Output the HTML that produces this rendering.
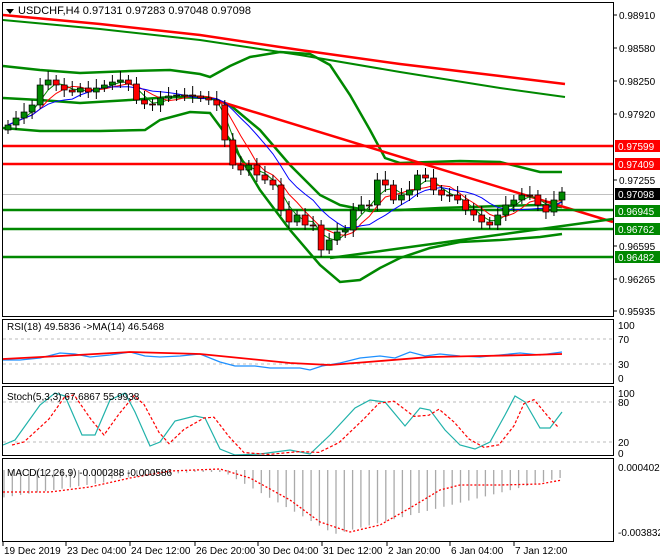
<!DOCTYPE html>
<html><head><meta charset="utf-8"><style>
html,body{margin:0;padding:0;background:#fff;width:660px;height:560px;overflow:hidden}
svg{display:block}
text{font-family:"Liberation Sans",sans-serif;font-size:10px;fill:#000}
</style></head><body>
<svg id="s" width="660" height="560" xmlns="http://www.w3.org/2000/svg">
<rect x="0" y="0" width="660" height="560" fill="#fff"/>
<g id="g"></g>
<!-- panel borders -->
<g fill="none" stroke="#000" stroke-width="1">
<rect x="2.5" y="2.5" width="611" height="314"/>
<rect x="2.5" y="319.5" width="611" height="64"/>
<rect x="2.5" y="386.5" width="611" height="69"/>
<rect x="2.5" y="458.5" width="611" height="83"/>
</g>
<polygon points="6,9 14,9 10,14" fill="#000"/>
<text x="18" y="14" style="font-size:11px">USDCHF,H4  0.97131 0.97283 0.97048 0.97098</text>
<text x="7" y="330">RSI(18) 49.5836  -&gt;MA(14) 46.5468</text>
<text x="7" y="400">Stoch(5,3,3) 67.6867 55.9938</text>
<text x="7" y="476">MACD(12,26,9) -0.000288 -0.000586</text>
<g id="ax"></g>
</svg>
<script>
const NS="http://www.w3.org/2000/svg";
const g=document.getElementById('g'),ax=document.getElementById('ax');
function el(p,t,a,txt){const e=document.createElementNS(NS,t);for(const k in a)e.setAttribute(k,a[k]);if(txt!==undefined)e.textContent=txt;p.appendChild(e);return e;}
function pl(pts,c,w,d){el(g,'polyline',{points:pts.map(p=>p.join(',')).join(' '),fill:'none',stroke:c,'stroke-width':w,'stroke-dasharray':d||''});}
// clip main
// grey current price line
el(g,'line',{x1:3,y1:194.5,x2:613,y2:194.5,stroke:'#c0c0c0','stroke-width':1});
// long MAs
pl([[3,15],[100,24],[200,35],[300,50],[400,64],[500,76],[565,84]],'#f00',2.5);
pl([[3,20],[100,29],[200,40],[300,55],[400,72],[500,88],[565,97]],'#080',2);
// bollinger
pl([[3,66],[40,70],[80,73],[130,71],[170,70],[200,74],[210,77],[230,66],[250,57],[280,52],[310,54],[330,65],[350,95],[370,130],[385,158],[400,163],[430,162],[460,161],[500,162],[540,172],[562,172]],'#080',2.5);
pl([[3,98],[40,100],[80,103],[130,100],[170,97],[210,98],[230,105],[260,130],[290,165],[320,195],[340,205],[370,211],[400,210],[440,208],[470,207],[500,206],[540,205],[562,207]],'#080',2.5);
pl([[3,128],[40,131],[100,131],[145,130],[160,120],[190,112],[210,113],[230,140],[260,190],[290,230],[320,265],[340,282],[360,280],[380,268],[400,258],[430,248],[460,242],[500,240],[540,237],[562,234]],'#080',2.5);
// trendlines
pl([[215,100],[613,222]],'#f00',2.5);
pl([[330,258],[613,219]],'#080',2.5);
// horizontal
[[146,'#f00'],[164,'#f00'],[210,'#080'],[229,'#080'],[257,'#080']].forEach(h=>el(g,'line',{x1:3,y1:h[0],x2:613,y2:h[0],stroke:h[1],'stroke-width':2.5}));
// candles
const cl=[125,118,112,105,85,80,85,90,92,88,92,88,85,82,80,84,100,104,105,98,96,95,95,96,98,100,105,140,165,170,165,175,180,185,210,222,215,225,225,250,240,232,230,210,205,205,180,185,200,195,190,175,178,190,195,195,200,210,215,222,225,215,205,200,195,195,205,212,200,192];
const n=cl.length,dx=(562-8)/(n-1);
// small MAs
function sm(k){const r=[];for(let i=0;i<n;i++){let s=0,c=0;for(let j=Math.max(0,i-k+1);j<=i;j++){s+=cl[j];c++;}r.push([8+i*dx,s/c]);}return r;}
pl(sm(3),'#080',1);pl(sm(5),'#f00',1);pl(sm(9),'#00f',1);
let prev=cl[0]+5;
for(let i=0;i<n;i++){const x=8+i*dx,o=prev,c=cl[i];const top=Math.min(o,c),bot=Math.max(o,c);
el(g,'line',{x1:x,y1:top-5-(i%3)*2,x2:x,y2:bot+4+(i%4),stroke:'#000','stroke-width':1});
el(g,'rect',{x:x-3,y:top,width:6,height:Math.max(1,bot-top),fill:c<o?'#080':'#f00',stroke:'#000','stroke-width':0.7});prev=c;}
// right axis labels
[[15,'0.98910'],[48,'0.98580'],[81,'0.98250'],[114,'0.97920'],[180,'0.97255'],[246,'0.96595'],[279,'0.96265'],[311,'0.95935']].forEach(l=>{el(ax,'line',{x1:613,y1:l[0],x2:617,y2:l[0],stroke:'#000'});el(ax,'text',{x:619,y:l[0]+4},l[1]);});
[[146,'0.97599','#f00'],[164,'0.97409','#f00'],[194,'0.97098','#000'],[211,'0.96945','#080'],[229,'0.96762','#080'],[257,'0.96482','#080']].forEach(l=>{el(ax,'rect',{x:615,y:l[0]-6,width:45,height:12,fill:l[2]});el(ax,'text',{x:618,y:l[0]+4,style:'fill:#fff'},l[1]);});
// RSI
[[339],[364]].forEach(l=>el(g,'line',{x1:3,y1:l[0],x2:613,y2:l[0],stroke:'#bbb','stroke-dasharray':'3,3'}));
[[325,'100'],[339,'70'],[364,'30'],[378,'0']].forEach(l=>el(ax,'text',{x:618,y:l[0]+4},l[1]));
pl([[3,360],[20,360],[40,358],[60,353],[75,354],[90,357],[110,355],[130,352],[145,356],[160,357],[180,356],[200,354],[220,362],[235,366],[255,366],[270,368],[285,368],[300,368],[310,370],[322,366],[340,363],[360,358],[380,356],[395,358],[410,352],[425,356],[440,354],[460,356],[480,357],[500,355],[520,353],[540,355],[562,352]],'#1e90ff',1.3);
pl([[3,359],[60,356],[130,352],[200,354],[240,358],[290,363],[330,365],[380,361],[430,357],[480,356],[530,355],[562,354]],'#f00',1.8);
// Stoch
[[402],[442]].forEach(l=>el(g,'line',{x1:3,y1:l[0],x2:613,y2:l[0],stroke:'#bbb','stroke-dasharray':'3,3'}));
[[393,'100'],[402,'80'],[442,'20'],[453,'0']].forEach(l=>el(ax,'text',{x:618,y:l[0]+4},l[1]));
const st=[[3,445],[15,440],[40,405],[55,393],[65,396],[82,435],[95,435],[110,400],[125,393],[135,412],[150,446],[160,442],[175,421],[195,416],[205,418],[220,449],[235,455],[260,454],[290,450],[310,454],[330,435],[355,408],[370,400],[385,402],[405,426],[420,408],[430,410],[445,430],[460,445],[475,449],[490,442],[505,415],[515,396],[525,402],[540,428],[550,428],[562,412]];
pl(st,'#20b2aa',1.2);
pl(st.map((p,i)=>[p[0]+9,i?(p[1]*0.6+st[i-1][1]*0.4):p[1]]).filter(p=>p[0]<=564),'#f00',1.2,'3,2');
// MACD
const mz=470;
for(let x=4;x<=562;x+=8.3){let v;const t=x;
if(t<110)v=28-t*0.15;else if(t<220)v=Math.max(2,(220-t)*0.08);else if(t<335)v=(t-220)*0.56;else v=Math.max(8,64-(t-335)*0.25);
el(g,'line',{x1:x,y1:mz,x2:x,y2:mz+v,stroke:'#aaa','stroke-width':1.3});}
pl([[3,492],[50,492],[90,487],[130,478],[170,471],[220,469],[250,478],[290,500],[320,522],[350,532],[380,525],[410,508],[440,490],[460,485],[500,485],[540,484],[562,480]],'#f00',1.3,'2,2');
el(ax,'text',{x:618,y:471},'0.000402');el(ax,'text',{x:618,y:536},'-0.003832');
// time axis
[[3,'19 Dec 2019'],[66,'23 Dec 04:00'],[130,'24 Dec 12:00'],[195,'26 Dec 20:00'],[258,'30 Dec 04:00'],[322,'31 Dec 12:00'],[387,'2 Jan 20:00'],[450,'6 Jan 04:00'],[514,'7 Jan 12:00']].forEach(l=>{el(ax,'line',{x1:l[0],y1:542,x2:l[0],y2:546,stroke:'#000'});el(ax,'text',{x:l[0]+1,y:554},l[1]);});
</script>
</body></html>
